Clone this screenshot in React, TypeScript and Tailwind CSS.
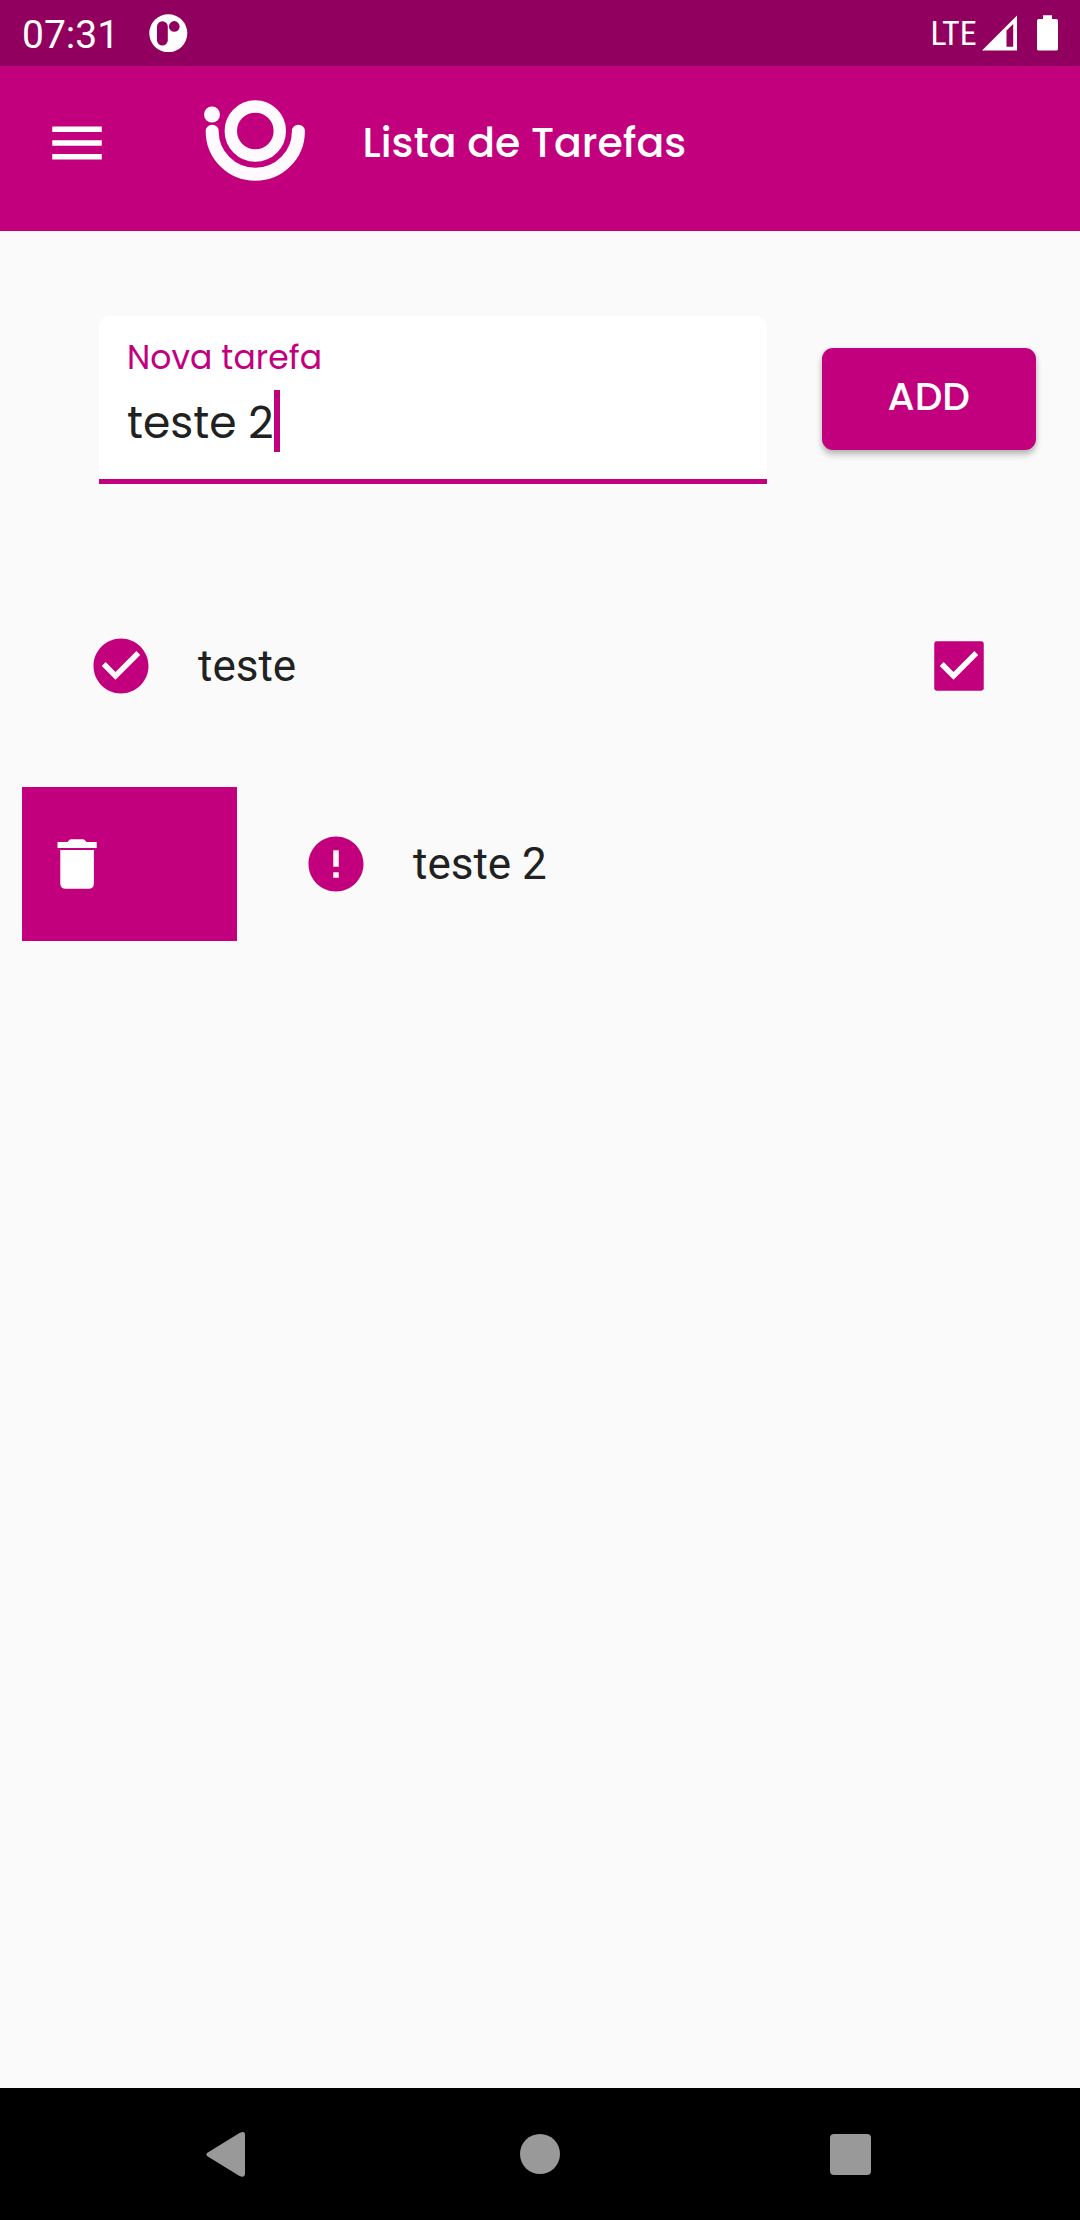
import { MdCheckCircle, MdError, MdMenu } from 'react-icons/md';

const geo = "font-['Poppins',Inter,sans-serif]";

function StatusBar() {
  return (
    <div className="flex h-[66px] items-center bg-[#91005e] text-white">
      <span className="ml-[22px] w-[127px] pt-[3px] text-[39px] leading-[50px]">07:31</span>
      <svg className="size-[38.6px]" viewBox="0 0 38.6 38.6">
        <circle cx="19.3" cy="19.3" r="19" fill="#fff" />
        <rect x="8" y="7.2" width="10.8" height="24.4" rx="5.4" fill="#91005e" />
        <circle cx="25.3" cy="12.4" r="5.3" fill="#91005e" />
      </svg>
      <div className="ml-auto flex items-center">
        <span className="w-[52px] pl-[0.5px] text-[34px] leading-[40px] [font-stretch:75%]">LTE</span>
        <svg className="h-[36px] w-[35px]" viewBox="0 0 35 36">
          <path fill="#fff" fillRule="evenodd" d="M0 35.5 35 0.5V35.5ZM24.5 15.6V31.8H31.2V9Z" />
        </svg>
        <svg className="mr-[22px] ml-[20px] h-[36px] w-[21px]" viewBox="0 0 21 36">
          <path fill="#fff" d="M6 0.3h9v3.7h4.3A1.7 1.7 0 0 1 21 5.7v28.2a1.7 1.7 0 0 1-1.7 1.7H1.7A1.7 1.7 0 0 1 0 33.9V5.7A1.7 1.7 0 0 1 1.7 4H6Z" />
        </svg>
      </div>
    </div>
  );
}

function Logo() {
  return (
    <svg className="h-[84px] w-[104px]" viewBox="0 0 104 84" fill="none" stroke="#fffafd">
      <circle cx="9" cy="16.5" r="8" fill="#fffafd" stroke="none" />
      <circle cx="52.3" cy="33" r="24.5" strokeWidth="12.4" />
      <path d="M9.2 33.2a43.1 43.1 0 0 0 86.2 0" strokeWidth="13" strokeLinecap="round" />
    </svg>
  );
}

function AppBar() {
  return (
    <header className="flex h-[165px] items-center bg-[#c2007d] pb-[11px] text-white">
      <MdMenu className="ml-[44px] size-[66px]" />
      <div className="ml-[93px] flex h-[90px] items-start">
        <Logo />
      </div>
      <h1 className={`ml-[55.5px] text-[41px] leading-[60px] font-medium ${geo}`}>
        Lista de Tarefas
      </h1>
    </header>
  );
}

function NewTask() {
  return (
    <div className="flex items-start pt-[85px] pl-[99px]">
      <div className={`h-[168px] w-[667.5px] rounded-t-[11px] border-b-[5.5px] border-[#c2007d] bg-white pt-[26px] pl-[28px] ${geo}`}>
        <div className="text-[33px] leading-[32px] tracking-[0.08px] text-[#c2007d]">Nova tarefa</div>
        <div className="mt-[16px] flex h-[62px] items-center">
          <span className="pt-[4px] text-[44px] leading-[62px] text-[#212121]">teste 2</span>
          <span className="h-[62px] w-[6px] bg-[#c2007d]" />
        </div>
      </div>
      <button className={`mt-[32px] ml-[55px] flex h-[101.5px] w-[214.5px] items-center justify-center rounded-[11px] bg-[#c2007d] pb-[3px] text-[39px] font-medium text-white shadow-[0_5px_6px_rgba(0,0,0,0.22),0_1px_5px_rgba(0,0,0,0.12)] ${geo}`}>
        ADD
      </button>
    </div>
  );
}

function Checkbox() {
  return (
    <svg className="ml-auto size-[66px]" viewBox="0 0 24 24">
      <rect x="3" y="3" width="18" height="18" rx="0.9" fill="#c2007d" />
      <path fill="#fff" d="M10 17l-5-5 1.41-1.41L10 14.17l7.59-7.59L19 8l-9 9z" />
    </svg>
  );
}

function Tasks() {
  return (
    <div className="flex flex-col gap-[44px] pt-[105px] text-[44px] leading-[52px] text-[#212121]">
      <div className="flex h-[154px] items-center pr-[88px] pl-[88px]">
        <MdCheckCircle className="size-[66px] text-[#c2007d]" />
        <span className="ml-[44px]">teste</span>
        <Checkbox />
      </div>
      <div className="flex h-[154px] items-center pl-[22px]">
        <div className="flex h-full w-[215px] items-center bg-[#c2007d] pl-[35px]">
          <svg className="h-[50px] w-[40px]" viewBox="0 0 40 50" fill="#fff">
            <path d="M0.5 3H10.5L12.3 0.9Q13 0.2 14 0.2H26Q27 0.2 27.7 0.9L29.5 3H39.7V9H0.5Z" />
            <path d="M3.3 11H36.9V44.2Q36.9 49.8 31.3 49.8H8.9Q3.3 49.8 3.3 44.2Z" />
          </svg>
        </div>
        <MdError className="ml-[66px] size-[66px] text-[#c2007d]" />
        <span className="ml-[44px]">teste 2</span>
      </div>
    </div>
  );
}

function NavBar() {
  return (
    <nav className="grid h-[132px] grid-cols-[1fr_42px_1fr] items-center bg-black text-[#999]">
      <svg className="ml-[206px] h-[46px] w-[40px]" viewBox="0 0 40 46" fill="currentColor">
        <path d="M1.8 21.4 33.5 2Q39 -0.6 39 4V42.3Q39 47.4 33.5 45L1.8 25.6Q-1 23.5 1.8 21.4Z" />
      </svg>
      <span className="mx-auto size-[40px] rounded-full bg-current" />
      <span className="mt-px ml-[269px] size-[41.3px] rounded-[4px] bg-current" />
    </nav>
  );
}

export default function App() {
  return (
    <div className="flex h-[2220px] w-[1080px] flex-col bg-[#fafafa] font-['Roboto',sans-serif]">
      <StatusBar />
      <AppBar />
      <main className="flex-1">
        <NewTask />
        <Tasks />
      </main>
      <NavBar />
    </div>
  );
}
